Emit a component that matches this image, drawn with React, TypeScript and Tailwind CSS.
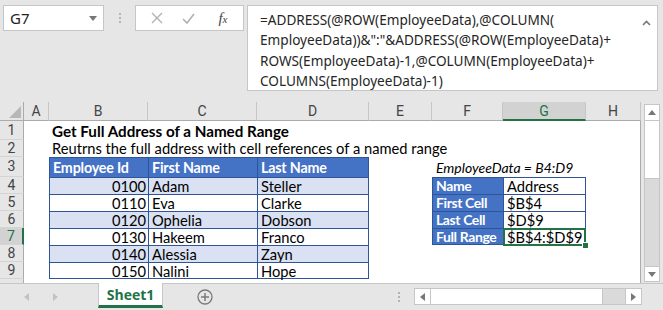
import React from "react";

const cellFont = { fontFamily: "Lato, 'Liberation Sans', sans-serif" };
const headFont = { fontFamily: "Roboto, 'Liberation Sans', sans-serif" };

const people = [
  ["0100", "Adam", "Steller"],
  ["0110", "Eva", "Clarke"],
  ["0120", "Ophelia", "Dobson"],
  ["0130", "Hakeem", "Franco"],
  ["0140", "Alessia", "Zayn"],
  ["0150", "Nalini", "Hope"],
];

const lookup = [
  ["Name", "Address"],
  ["First Cell", "$B$4"],
  ["Last Cell", "$D$9"],
  ["Full Range", "$B$4:$D$9"],
];

const formula = [
  "=ADDRESS(@ROW(EmployeeData),@COLUMN(",
  'EmployeeData))&":"&ADDRESS(@ROW(EmployeeData)+',
  "ROWS(EmployeeData)-1,@COLUMN(EmployeeData)+",
  "COLUMNS(EmployeeData)-1)",
];

const letters = ["A", "B", "C", "D", "E", "F", "G", "H"];

const RowHead = ({ n, active }: { n: string; active?: boolean }) => (
  <div
    className={
      active
        ? "flex items-center justify-center bg-[#d2d2d2] text-[#217346] border-r-2 border-r-[#217346] border-b border-b-[#d4d4d4] text-[14px] leading-[15px]"
        : "flex items-center justify-center bg-[#e6e6e6] text-[#444] border-r border-r-[#ababab] border-b border-b-[#d4d4d4] text-[14px] leading-[15px]"
    }
    style={headFont}
  >
    {n}
  </div>
);

export default function App() {
  return (
    <div className="w-[663px] h-[310px] bg-[#e6e6e6] overflow-hidden flex flex-col">
      {/* formula bar */}
      <div className="h-[102px] flex items-start pt-[5px] pl-[3px] shrink-0">
        <div className="w-[101px] h-[26px] bg-white border border-[#c6c6c6] flex items-center justify-between pl-[6px] pr-[6px]">
          <span className="text-[15px] text-[#222]" style={{ fontFamily: "'Noto Sans', sans-serif" }}>
            G7
          </span>
          <svg width="8" height="5" viewBox="0 0 8 5">
            <path d="M0 0h8L4 5z" fill="#777" />
          </svg>
        </div>
        <div className="w-[31px] h-[26px] flex flex-col items-center justify-center gap-[2px]">
          <span className="w-[2px] h-[2px] bg-[#b3b3b3]" />
          <span className="w-[2px] h-[2px] bg-[#b3b3b3]" />
          <span className="w-[2px] h-[2px] bg-[#b3b3b3]" />
        </div>
        <div className="w-[109px] h-[26px] bg-white border border-[#c6c6c6] flex items-center justify-around px-[6px]">
          <svg width="12" height="12" viewBox="0 0 12 12">
            <path d="M1 1l10 10M11 1L1 11" stroke="#b0b0b0" strokeWidth="1.3" />
          </svg>
          <svg width="13" height="11" viewBox="0 0 13 11">
            <path d="M1 6l4 4 7-9" stroke="#b0b0b0" strokeWidth="1.6" fill="none" />
          </svg>
          <span className="text-[15px] italic text-[#444] ml-[4px]" style={{ fontFamily: "'Liberation Serif', serif" }}>
            f<span className="text-[11px]">x</span>
          </span>
        </div>
        <div className="ml-[3px] w-[411px] h-[86px] bg-white border border-[#c6c6c6] relative pl-[12px] pt-[4px]">
          {formula.map((line) => (
            <div
              key={line}
              className="h-[20.3px] leading-[20px] text-[13.6px] text-[#262626] whitespace-nowrap"
              style={{ fontFamily: "'Noto Sans', sans-serif" }}
            >
              {line}
            </div>
          ))}
          <svg className="absolute right-[6px] top-[14px]" width="9" height="6" viewBox="0 0 9 6">
            <path d="M1 5l3.5-3.5L8 5" stroke="#777" strokeWidth="1.6" fill="none" />
          </svg>
        </div>
      </div>

      {/* grid + vertical scroll */}
      <div className="flex h-[181px] shrink-0">
        <div
          className="w-[641px] bg-white grid grid-cols-[24px_25px_99px_109px_112px_63px_71px_83px_55px] grid-rows-[19px_19px_17px_20px_17px_17px_17px_17px_17px_17px_1fr] border-r border-[#ababab]"
          style={cellFont}
        >
          {/* column headers */}
          <div className="bg-[#e6e6e6] border-r border-b border-[#ababab] relative">
            <svg className="absolute right-[2px] bottom-[2px]" width="12" height="12" viewBox="0 0 12 12">
              <path d="M12 0v12H0z" fill="#b7b7b7" />
            </svg>
          </div>
          {letters.map((l) =>
            l === "G" ? (
              <div
                key={l}
                className="flex items-center justify-center bg-[#d2d2d2] text-[#217346] border-r border-r-[#c6c6c6] border-b-2 border-b-[#217346] text-[14px] leading-[16px]"
                style={headFont}
              >
                {l}
              </div>
            ) : (
              <div
                key={l}
                className="flex items-center justify-center bg-[#e6e6e6] text-[#444] border-r border-r-[#c6c6c6] border-b border-b-[#ababab] text-[14px] leading-[16px]"
                style={headFont}
              >
                {l}
              </div>
            )
          )}

          {/* row 1 */}
          <RowHead n="1" />
          <div />
          <div className="col-span-7 flex items-end whitespace-nowrap pl-[3px] text-[15.2px] font-bold text-black leading-[18px]">
            Get Full Address of a Named Range
          </div>

          {/* row 2 */}
          <RowHead n="2" />
          <div />
          <div className="col-span-7 flex items-end whitespace-nowrap pl-[3px] text-[14.7px] text-black leading-[17px]">
            Reutrns the full address with cell references of a named range
          </div>

          {/* row 3 */}
          <RowHead n="3" />
          <div />
          {["Employee Id", "First Name", "Last Name"].map((h, i) => (
            <div
              key={h}
              className={
                i === 2
                  ? "flex items-end pl-[3px] bg-[#4472c4] text-white font-bold text-[14.3px] tracking-[-0.2px] leading-[18px] whitespace-nowrap border-l border-t border-r border-[#2f5597]"
                  : "flex items-end pl-[3px] bg-[#4472c4] text-white font-bold text-[14.3px] tracking-[-0.2px] leading-[18px] whitespace-nowrap border-l border-t border-[#2f5597]"
              }
            >
              {h}
            </div>
          ))}
          <div />
          <div className="col-span-3 flex items-end whitespace-nowrap pl-[4px] italic text-[14px] text-black leading-[18px]">
            EmployeeData = B4:D9
          </div>

          {/* rows 4-9 */}
          {people.map((p, i) => {
            const n = i + 4;
            const band = i % 2 === 0 ? "bg-[#d9e1f2]" : "bg-white";
            const last = i === people.length - 1;
            const base = `flex items-center whitespace-nowrap text-[14.7px] leading-[16px] text-black border-l border-t border-[#2f5597] ${band}`;
            const lk = lookup[i];
            return (
              <React.Fragment key={n}>
                <RowHead n={String(n)} active={n === 7} />
                <div />
                <div className={last ? `${base} border-b justify-end pr-[2px]` : `${base} justify-end pr-[2px]`}>{p[0]}</div>
                <div className={last ? `${base} border-b pl-[3px]` : `${base} pl-[3px]`}>{p[1]}</div>
                <div className={last ? `${base} border-b border-r pl-[3px]` : `${base} border-r pl-[3px]`}>{p[2]}</div>
                <div />
                {lk ? (
                  <>
                    <div
                      className={
                        i === 3
                          ? "flex items-center whitespace-nowrap overflow-hidden pl-[3px] bg-[#4472c4] text-white font-bold text-[14px] tracking-[-0.4px] leading-[16px] border-l border-t border-b border-[#2f5597]"
                          : "flex items-center whitespace-nowrap overflow-hidden pl-[3px] bg-[#4472c4] text-white font-bold text-[14px] tracking-[-0.4px] leading-[16px] border-l border-t border-[#2f5597]"
                      }
                    >
                      {lk[0]}
                    </div>
                    <div
                      className={
                        i === 3
                          ? "relative flex items-center whitespace-nowrap pl-[3px] bg-white text-black text-[14.7px] leading-[16px] border-l border-t border-r border-b border-[#2f5597]"
                          : "flex items-center whitespace-nowrap pl-[3px] bg-white text-black text-[14.7px] leading-[16px] border-l border-t border-r border-[#2f5597]"
                      }
                    >
                      {lk[1]}
                      {i === 3 && (
                        <>
                          <div className="absolute -left-[1px] -top-[1px] -right-[1px] -bottom-[2px] border-2 border-[#217346]" />
                          <div className="absolute -right-[4px] -bottom-[5px] w-[7px] h-[7px] bg-[#217346] border border-white" />
                        </>
                      )}
                    </div>
                  </>
                ) : (
                  <>
                    <div />
                    <div />
                  </>
                )}
                <div />
              </React.Fragment>
            );
          })}

          {/* partial row 10 */}
          <div className="bg-[#e6e6e6] border-r border-[#ababab]" />
          <div className="col-span-8" />
        </div>

        {/* vertical scrollbar */}
        <div className="flex-1 pt-[2px] pl-[3px] pr-[3px] pb-[1px]">
          <div className="h-full flex flex-col bg-[#dadada] border border-[#c6c6c6]">
            <div className="h-[16px] bg-white border-b border-[#c6c6c6] flex items-center justify-center">
              <svg width="8" height="5" viewBox="0 0 8 5">
                <path d="M0 5L4 0l4 5z" fill="#777" />
              </svg>
            </div>
            <div className="h-[58px] bg-white border-b border-[#c6c6c6]" />
            <div className="flex-1" />
            <div className="h-[15px] bg-white border-t border-[#c6c6c6] flex items-center justify-center">
              <svg width="8" height="5" viewBox="0 0 8 5">
                <path d="M0 0h8L4 5z" fill="#777" />
              </svg>
            </div>
          </div>
        </div>
      </div>

      {/* sheet tabs */}
      <div className="flex-1 flex items-start border-t border-[#c6c6c6]">
        <div className="w-[98px] h-[26px] flex items-center">
          <svg className="ml-[24px]" width="5" height="8" viewBox="0 0 5 8">
            <path d="M5 0v8L0 4z" fill="#c2c2c2" />
          </svg>
          <svg className="ml-[24px]" width="5" height="8" viewBox="0 0 5 8">
            <path d="M0 0v8l5-4z" fill="#c2c2c2" />
          </svg>
        </div>
        <div className="-mt-px w-[65px] h-[25px] bg-white border-l border-r border-[#c6c6c6] border-b-[3px] border-b-[#217346] flex items-center justify-center">
          <span className="text-[14px] font-bold text-[#217346]" style={{ fontFamily: "'Open Sans', sans-serif" }}>
            Sheet1
          </span>
        </div>
        <div className="ml-[34px] mt-[5px]">
          <svg width="16" height="16" viewBox="0 0 16 16">
            <circle cx="8" cy="8" r="7" stroke="#7a7a7a" strokeWidth="1.3" fill="none" />
            <path d="M8 4v8M4 8h8" stroke="#7a7a7a" strokeWidth="1.5" />
          </svg>
        </div>
        <div className="ml-[185px] mt-[8px] flex flex-col gap-[2px]">
          <span className="w-[2px] h-[2px] bg-[#b3b3b3]" />
          <span className="w-[2px] h-[2px] bg-[#b3b3b3]" />
          <span className="w-[2px] h-[2px] bg-[#b3b3b3]" />
        </div>
        <div className="ml-[14px] mt-[4px] w-[228px] h-[17px] flex border border-[#c6c6c6] bg-[#dadada]">
          <div className="w-[16px] bg-white border-r border-[#c6c6c6] flex items-center justify-center">
            <svg width="5" height="8" viewBox="0 0 5 8">
              <path d="M5 0v8L0 4z" fill="#777" />
            </svg>
          </div>
          <div className="w-[172px] bg-white border-r border-[#c6c6c6]" />
          <div className="flex-1" />
          <div className="w-[16px] bg-white border-l border-[#c6c6c6] flex items-center justify-center">
            <svg width="5" height="8" viewBox="0 0 5 8">
              <path d="M0 0v8l5-4z" fill="#777" />
            </svg>
          </div>
        </div>
      </div>
    </div>
  );
}
